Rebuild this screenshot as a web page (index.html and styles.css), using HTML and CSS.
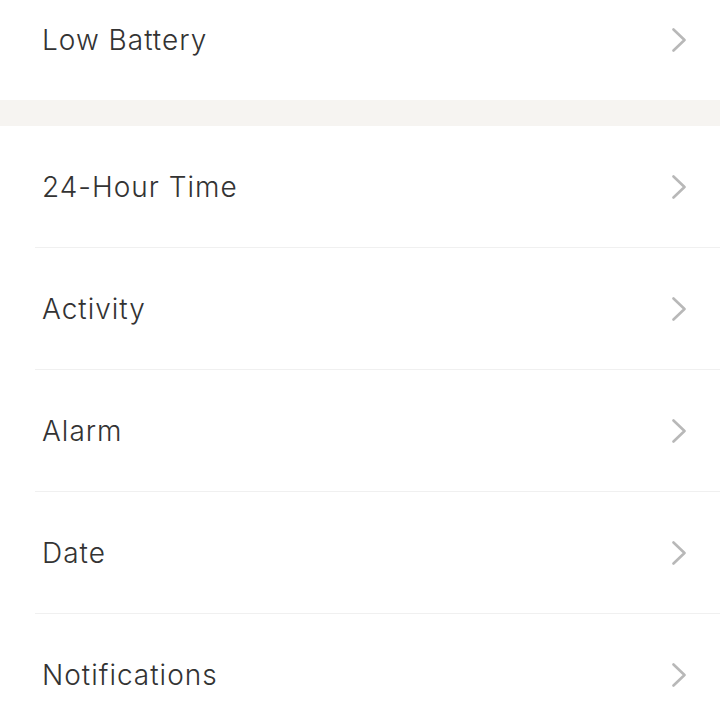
FILE: index.html
```html
<!DOCTYPE html>
<html lang="en">
<head>
  <meta charset="UTF-8" />
  <meta name="viewport" content="width=device-width, initial-scale=1.0"/>
  <title>Settings</title>
  <link rel="stylesheet" href="styles.css">
</head>
<body>
  <div class="group">
    <div class="row first">
      <span class="label">Low Battery</span>
      <svg class="chevron" viewBox="0 0 14 24"><path d="M1.5 1.5 L12.5 12 L1.5 22.5"/></svg>
    </div>
  </div>

  <div class="spacer"></div>

  <div class="group">
    <div class="row">
      <span class="label">24-Hour Time</span>
      <svg class="chevron" viewBox="0 0 14 24"><path d="M1.5 1.5 L12.5 12 L1.5 22.5"/></svg>
    </div>
    <div class="row">
      <span class="label">Activity</span>
      <svg class="chevron" viewBox="0 0 14 24"><path d="M1.5 1.5 L12.5 12 L1.5 22.5"/></svg>
    </div>
    <div class="row">
      <span class="label">Alarm</span>
      <svg class="chevron" viewBox="0 0 14 24"><path d="M1.5 1.5 L12.5 12 L1.5 22.5"/></svg>
    </div>
    <div class="row">
      <span class="label">Date</span>
      <svg class="chevron" viewBox="0 0 14 24"><path d="M1.5 1.5 L12.5 12 L1.5 22.5"/></svg>
    </div>
    <div class="row">
      <span class="label">Notifications</span>
      <svg class="chevron" viewBox="0 0 14 24"><path d="M1.5 1.5 L12.5 12 L1.5 22.5"/></svg>
    </div>
  </div>
</body>
</html>
```
FILE: styles.css
```css
body {
  margin: 0;
  background-color: #ffffff;
  color: #333333;
  font-family: 'Inter', 'Noto Sans', sans-serif;
}

.group {
  padding-left: 35px;
  background-color: #ffffff;
}

.row {
  display: flex;
  justify-content: space-between;
  align-items: center;
  height: 121px;
  padding: 0 34px 0 7px;
  border-bottom: 1px solid #f0f0f0;
}

.row:last-child {
  border-bottom: none;
}

.row.first {
  height: 80px;
  padding-bottom: 20px;
  border-bottom: none;
}

.label {
  font-size: 28px;
  font-weight: 300;
  letter-spacing: 1px;
}

.chevron {
  width: 14px;
  height: 24px;
  fill: none;
  stroke: #b8b8b8;
  stroke-width: 2.6;
  stroke-linecap: round;
  stroke-linejoin: round;
}

.spacer {
  height: 26px;
  background-color: #f6f4f1;
}
```
